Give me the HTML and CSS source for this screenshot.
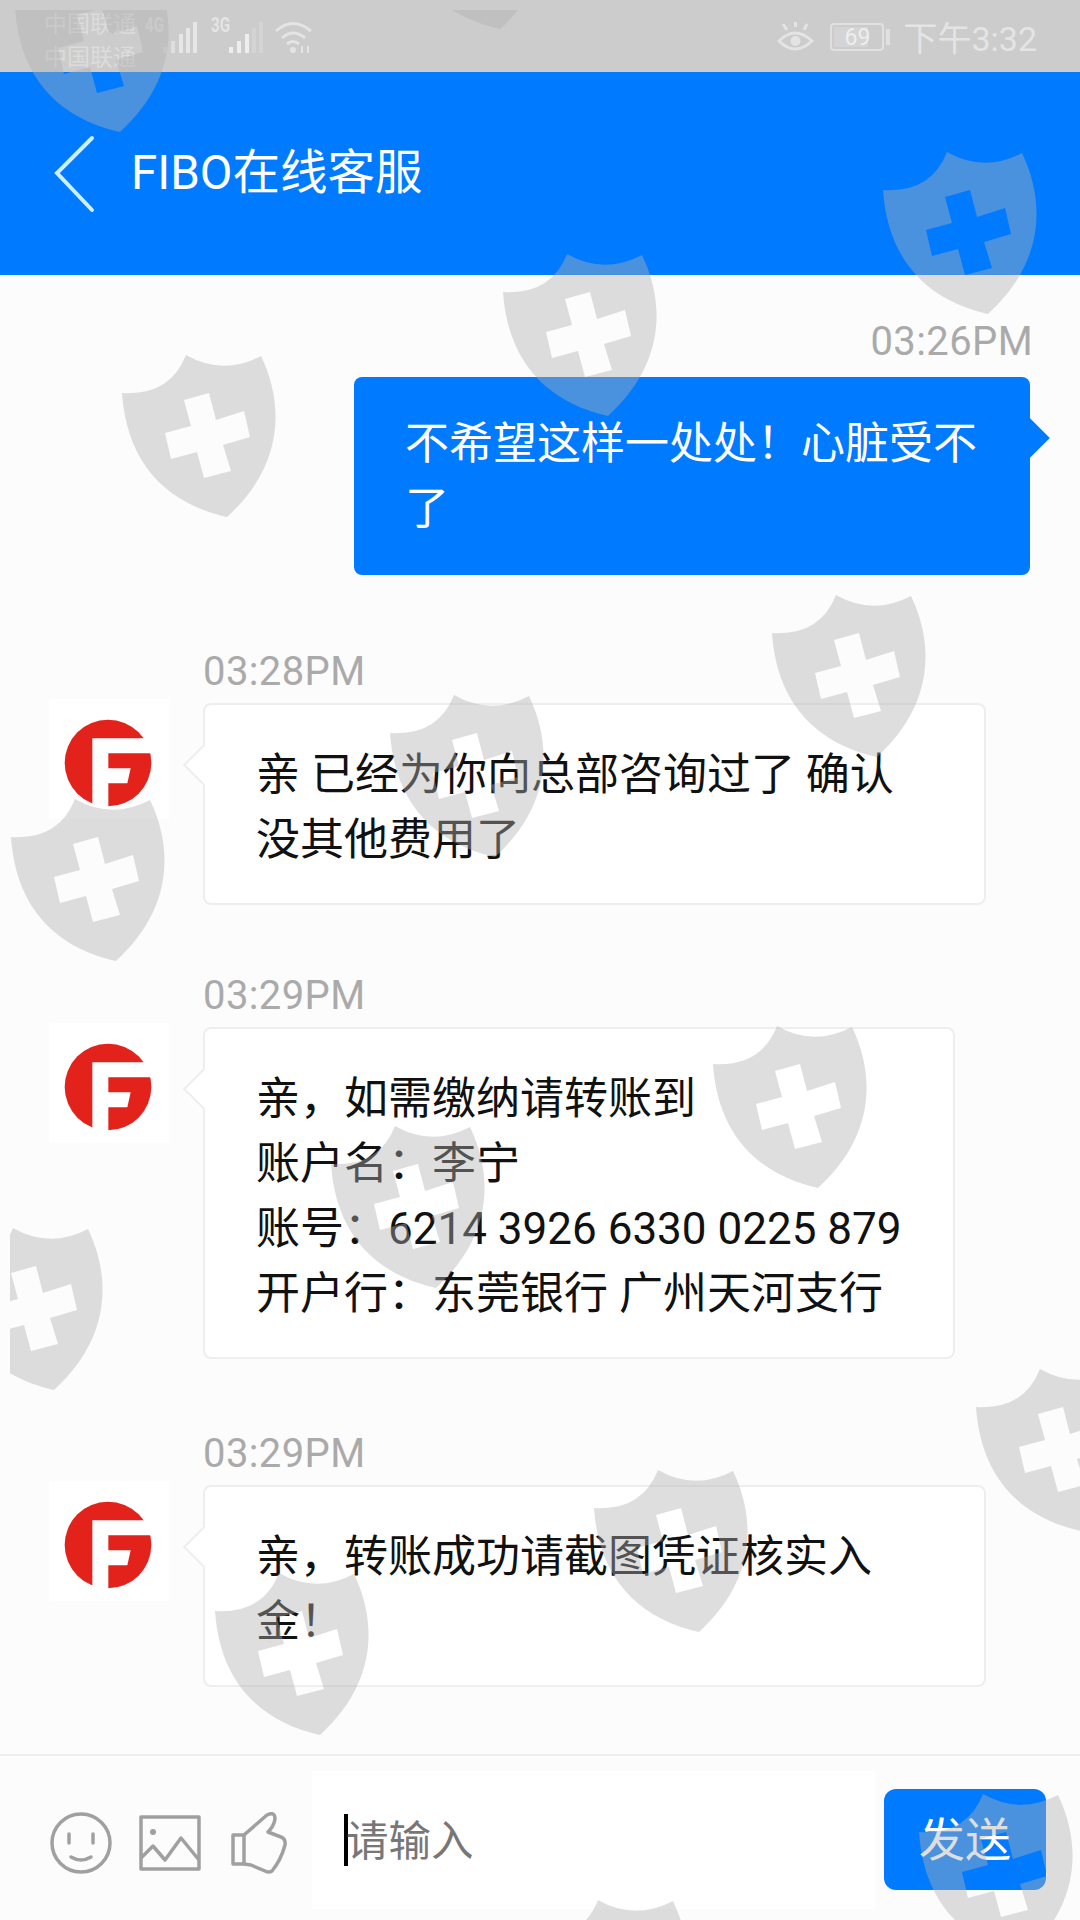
FILE: index.html
```html
<!DOCTYPE html>
<html lang="zh-CN">
<head>
  <meta charset="UTF-8">
  <meta name="viewport" content="width=device-width, initial-scale=1.0">
  <title>FIBO在线客服</title>
  <link rel="stylesheet" href="styles.css">
</head>
<body>
  <div class="page">
    <div class="statusbar">
      <div class="status-left">
        <div class="carrier"><span>中国联通</span><span>中国联通</span></div>
        <span class="net net-dim">4G</span>
        <svg class="bars" width="35" height="34" viewBox="0 0 35 34">
          <rect x="0" y="26" width="4" height="6" fill="#d8d8d8"/>
          <rect x="8" y="20" width="4" height="12" fill="#dedede"/>
          <rect x="16" y="13" width="4" height="19" fill="#e6e6e6"/>
          <rect x="23" y="7" width="4" height="25" fill="#e6e6e6"/>
          <rect x="30" y="1" width="4" height="31" fill="#e6e6e6"/>
        </svg>
        <span class="net">3G</span>
        <svg class="bars" width="35" height="34" viewBox="0 0 35 34">
          <rect x="0" y="26" width="4" height="6" fill="#eeeeee"/>
          <rect x="8" y="20" width="4" height="12" fill="#eeeeee"/>
          <rect x="16" y="13" width="4" height="19" fill="#eeeeee"/>
          <rect x="23" y="7" width="4" height="25" fill="#d4d4d4"/>
          <rect x="30" y="1" width="4" height="31" fill="#d4d4d4"/>
        </svg>
        <svg class="wifi" width="40" height="34" viewBox="0 0 40 34" fill="none" stroke="#e4e4e4" stroke-width="3">
          <path d="M2 11 Q19 -4 37 11"/>
          <path d="M8 18 Q19 8 31 18"/>
          <path d="M13 24 Q19 19 25 24"/>
          <circle cx="19" cy="30" r="3" fill="#e4e4e4" stroke="none"/>
          <path d="M28 26 v7 M34 33 v-7" stroke-width="2"/>
        </svg>
      </div>
      <div class="status-right">
        <svg class="eye" width="37" height="32" viewBox="0 0 37 32" fill="none" stroke="#e4e4e4" stroke-width="3">
          <path d="M2 19 Q18 3 35 19 Q18 35 2 19 Z"/>
          <circle cx="18.500" cy="19" r="5" fill="#e4e4e4" stroke="none"/>
          <path d="M6 2 L10 8 M30 2 L27 8 M18.500 0 V5"/>
        </svg>
        <div class="battery"><span class="battery-level"></span><span class="battery-num">69</span></div>
        <span class="battery-nub"></span>
        <span class="clock">下午3:32</span>
      </div>
    </div>

    <div class="header">
      <svg class="back" width="42" height="78" viewBox="0 0 42 78" fill="none" stroke="#cfeeff" stroke-width="4" stroke-linecap="round">
        <path d="M38 3 L3 38 L38 75"/>
      </svg>
      <span class="title">FIBO在线客服</span>
    </div>

    <div class="messages">
      <div class="msg msg-me">
        <div class="time">03:26PM</div>
        <div class="bubble bubble-me">不希望这样一处处&#xFF01;心脏受不<br>了</div>
      </div>

      <div class="msg msg-tight">
        <div class="time time-left">03:28PM</div>
        <div class="msg-row">
          <div class="avatar">
            <svg width="88" height="88" viewBox="0 0 264 264">
              <circle cx="132" cy="132" r="130" fill="#e3231b"/>
              <path d="M85 58 H264 V103 H133 V148 H200 L190 193 H133 V264 H85 Z" fill="#fff"/>
            </svg>
          </div>
          <div class="bubble bubble-wide">亲 已经为你向总部咨询过了 确认<br>没其他费用了</div>
        </div>
      </div>

      <div class="msg">
        <div class="time time-left">03:29PM</div>
        <div class="msg-row">
          <div class="avatar">
            <svg width="88" height="88" viewBox="0 0 264 264">
              <circle cx="132" cy="132" r="130" fill="#e3231b"/>
              <path d="M85 58 H264 V103 H133 V148 H200 L190 193 H133 V264 H85 Z" fill="#fff"/>
            </svg>
          </div>
          <div class="bubble">亲&#xFF0C;如需缴纳请转账到<br>账户名&#xFF1A;李宁<br>账号&#xFF1A;6214 3926 6330 0225 879<br>开户行&#xFF1A;东莞银行 广州天河支行</div>
        </div>
      </div>

      <div class="msg">
        <div class="time time-left">03:29PM</div>
        <div class="msg-row">
          <div class="avatar">
            <svg width="88" height="88" viewBox="0 0 264 264">
              <circle cx="132" cy="132" r="130" fill="#e3231b"/>
              <path d="M85 58 H264 V103 H133 V148 H200 L190 193 H133 V264 H85 Z" fill="#fff"/>
            </svg>
          </div>
          <div class="bubble bubble-wide">亲&#xFF0C;转账成功请截图凭证核实入<br>金&#xFF01;</div>
        </div>
      </div>
    </div>

    <div class="footer">
      <div class="tools">
        <svg width="62" height="62" viewBox="0 0 62 62" fill="none" stroke="#a0a0a0" stroke-width="3.500" stroke-linecap="round">
          <circle cx="31" cy="31" r="29"/>
          <path d="M19 22 v9 M43 22 v9"/>
          <path d="M21 45 Q31 51 41 45"/>
        </svg>
        <svg width="62" height="56" viewBox="0 0 62 56" fill="none" stroke="#a0a0a0" stroke-width="3.500" stroke-linejoin="round">
          <rect x="2" y="2" width="58" height="52"/>
          <circle cx="14" cy="17" r="3" fill="#a0a0a0" stroke="none"/>
          <path d="M2 43 L14 31 L26 45 L42 23 L60 45"/>
        </svg>
        <svg class="thumb" width="56" height="62" viewBox="0 0 56 62" fill="none" stroke="#a0a0a0" stroke-width="3.500" stroke-linejoin="round">
          <path d="M2 23 H13 V52 H2 Z"/>
          <path d="M13 23 L36 3 Q44 -1 44 7 Q43 14 37 20 L50 25 Q55 27 54 33 Q50 48 41 59 Q38 61 34 59 L20 53 L13 52"/>
        </svg>
      </div>
      <div class="input-box">
        <span class="caret"></span>
        <span class="placeholder">请输入</span>
      </div>
      <button class="send">发送</button>
    </div>

    <!-- 水印层,盖在整个页面上 -->
    <svg class="watermark" width="1070" height="1910" viewBox="10 10 1070 1910">
      <defs>
        <path id="shield" fill="rgba(176,176,176,0.42)" fill-rule="evenodd" d="M-13 -81 Q24 -60 62 -80 C86 -30 84 30 28 81 C-30 68 -72 30 -77 -43 Q-29 -40 -13 -81 Z M-15 -36 L10 -43 L17 -16 L45 -25 L51 1 L24 9 L32 35 L5 42 L-2 16 L-28 23 L-34 -3 L-8 -10 Z"/>
      </defs>
      <use href="#shield" x="92" y="51"/>
      <use href="#shield" x="472" y="-52"/>
      <use href="#shield" x="960" y="233"/>
      <use href="#shield" x="580" y="335"/>
      <use href="#shield" x="199" y="436"/>
      <use href="#shield" x="849" y="676"/>
      <use href="#shield" x="467" y="776"/>
      <use href="#shield" x="88" y="880"/>
      <use href="#shield" x="790" y="1107"/>
      <use href="#shield" x="408" y="1207"/>
      <use href="#shield" x="26" y="1309"/>
      <use href="#shield" x="1053" y="1450"/>
      <use href="#shield" x="671" y="1551"/>
      <use href="#shield" x="292" y="1654"/>
      <use href="#shield" x="996" y="1875"/>
      <use href="#shield" x="611" y="1981"/>
    </svg>
  </div>
</body>
</html>
```

FILE: styles.css
```css
* {
  box-sizing: border-box;
}
body {
  margin: 0;
  font-family: Roboto, "Noto Sans CJK SC", sans-serif;
  background: #fcfcfc;
}
.page {
  position: relative;
  width: 1080px;
  height: 1920px;
  overflow: hidden;
  display: flex;
  flex-direction: column;
}
.watermark {
  position: absolute;
  left: 10px;
  top: 10px;
  pointer-events: none;
}

/* 状态栏 */
.statusbar {
  flex: none;
  height: 72px;
  background: #cccccc;
  padding: 0 43px 0 44px;
  display: flex;
  justify-content: space-between;
  align-items: center;
  color: #e4e4e4;
}
.status-left, .status-right {
  display: flex;
  align-items: center;
}
.carrier {
  display: flex;
  flex-direction: column;
  font-size: 23px;
  line-height: 33px;
  margin-top: 10px;
  color: #dcdcdc;
  width: 101px;
}
.net {
  font-size: 21px;
  font-weight: 700;
  width: 18px;
  margin: -22px 0 0 0;
  transform: scaleX(0.72);
  transform-origin: left center;
}
.net-dim {
  color: #dcdcdc;
}
.bars {
  margin: 4px 13px 0 0;
}
.wifi {
  margin: 2px 0 0 -3px;
}
.eye {
  margin: 4px 16px 0 0;
}
.battery {
  position: relative;
  width: 54px;
  height: 28px;
  border: 2px solid #e0e0e0;
  border-radius: 4px;
  margin-top: 2px;
  display: flex;
  align-items: center;
  justify-content: center;
}
.battery-level {
  position: absolute;
  left: 2px;
  top: 2px;
  bottom: 2px;
  width: 34px;
  background: #d4d4d4;
}
.battery-num {
  position: relative;
  font-size: 23px;
  color: #eeeeee;
}
.battery-nub {
  width: 4px;
  height: 16px;
  background: #e0e0e0;
  margin: 2px 13px 0 2px;
}
.clock {
  font-size: 34px;
  color: #e4e4e4;
}

/* 顶部导航 */
.header {
  flex: none;
  height: 203px;
  background: #007aff;
  display: flex;
  align-items: center;
  padding-left: 54px;
  gap: 35px;
}
.title {
  font-size: 47.500px;
  color: #fff;
  margin-bottom: 10px;
}

/* 聊天内容 */
.messages {
  flex: 1;
  min-height: 0;
  padding: 44px 50px 0 49px;
}
.msg {
  margin-bottom: 72px;
}
.msg-tight {
  margin-bottom: 68px;
}
.msg-me {
  margin-bottom: 74px;
  display: flex;
  flex-direction: column;
  align-items: flex-end;
}
.time {
  font-size: 40px;
  line-height: 46px;
  letter-spacing: 0.4px;
  color: #aaaaaa;
  margin: 0 -3px 12px 0;
}
.time-left {
  margin: 0 0 8px 154px;
}
.msg-row {
  display: flex;
  align-items: flex-start;
  gap: 34px;
}
.avatar {
  width: 120px;
  height: 120px;
  margin-top: -4px;
  background: #fff;
  display: flex;
  align-items: center;
  justify-content: center;
}
.avatar svg {
  margin: 8px 3px 0 0;
}
.bubble {
  position: relative;
  padding: 38px 51px 30px;
  font-size: 44px;
  line-height: 65px;
  color: #111111;
  background: #fff;
  border: 2px solid #eeeeee;
  border-radius: 8px;
}
.bubble::before {
  content: "";
  position: absolute;
  left: -16px;
  top: 45px;
  width: 28px;
  height: 28px;
  background: #fff;
  border-left: 2px solid #eeeeee;
  border-bottom: 2px solid #eeeeee;
  transform: rotate(45deg);
}
.bubble-wide {
  width: 783px;
}
.bubble-me {
  width: 676px;
  padding: 35px 51px 33px;
  color: #fff;
  background: #007aff;
  border: none;
}
.bubble-me::before {
  left: auto;
  right: -14px;
  top: 47px;
  background: #007aff;
  border: none;
}

/* 底部输入 */
.footer {
  flex: none;
  height: 166px;
  border-top: 2px solid #eeeeee;
  padding: 15px 34px 12px 50px;
  display: flex;
  align-items: center;
}
.tools {
  display: flex;
  align-items: center;
  gap: 27px;
  width: 262px;
  margin-top: 6px;
}
.thumb {
  margin-left: 3px;
}
.input-box {
  width: 563px;
  height: 138px;
  background: #fff;
  display: flex;
  align-items: center;
  padding-left: 32px;
}
.caret {
  width: 4px;
  height: 52px;
  background: #000;
}
.placeholder {
  font-size: 42.500px;
  color: #777777;
  margin: -4px 0 0 -2px;
}
.send {
  width: 162px;
  height: 101px;
  margin-left: 9px;
  padding: 0 0 8px;
  border: none;
  border-radius: 12px;
  background: #007aff;
  color: #fff;
  font-family: inherit;
  font-size: 46px;
}
```
